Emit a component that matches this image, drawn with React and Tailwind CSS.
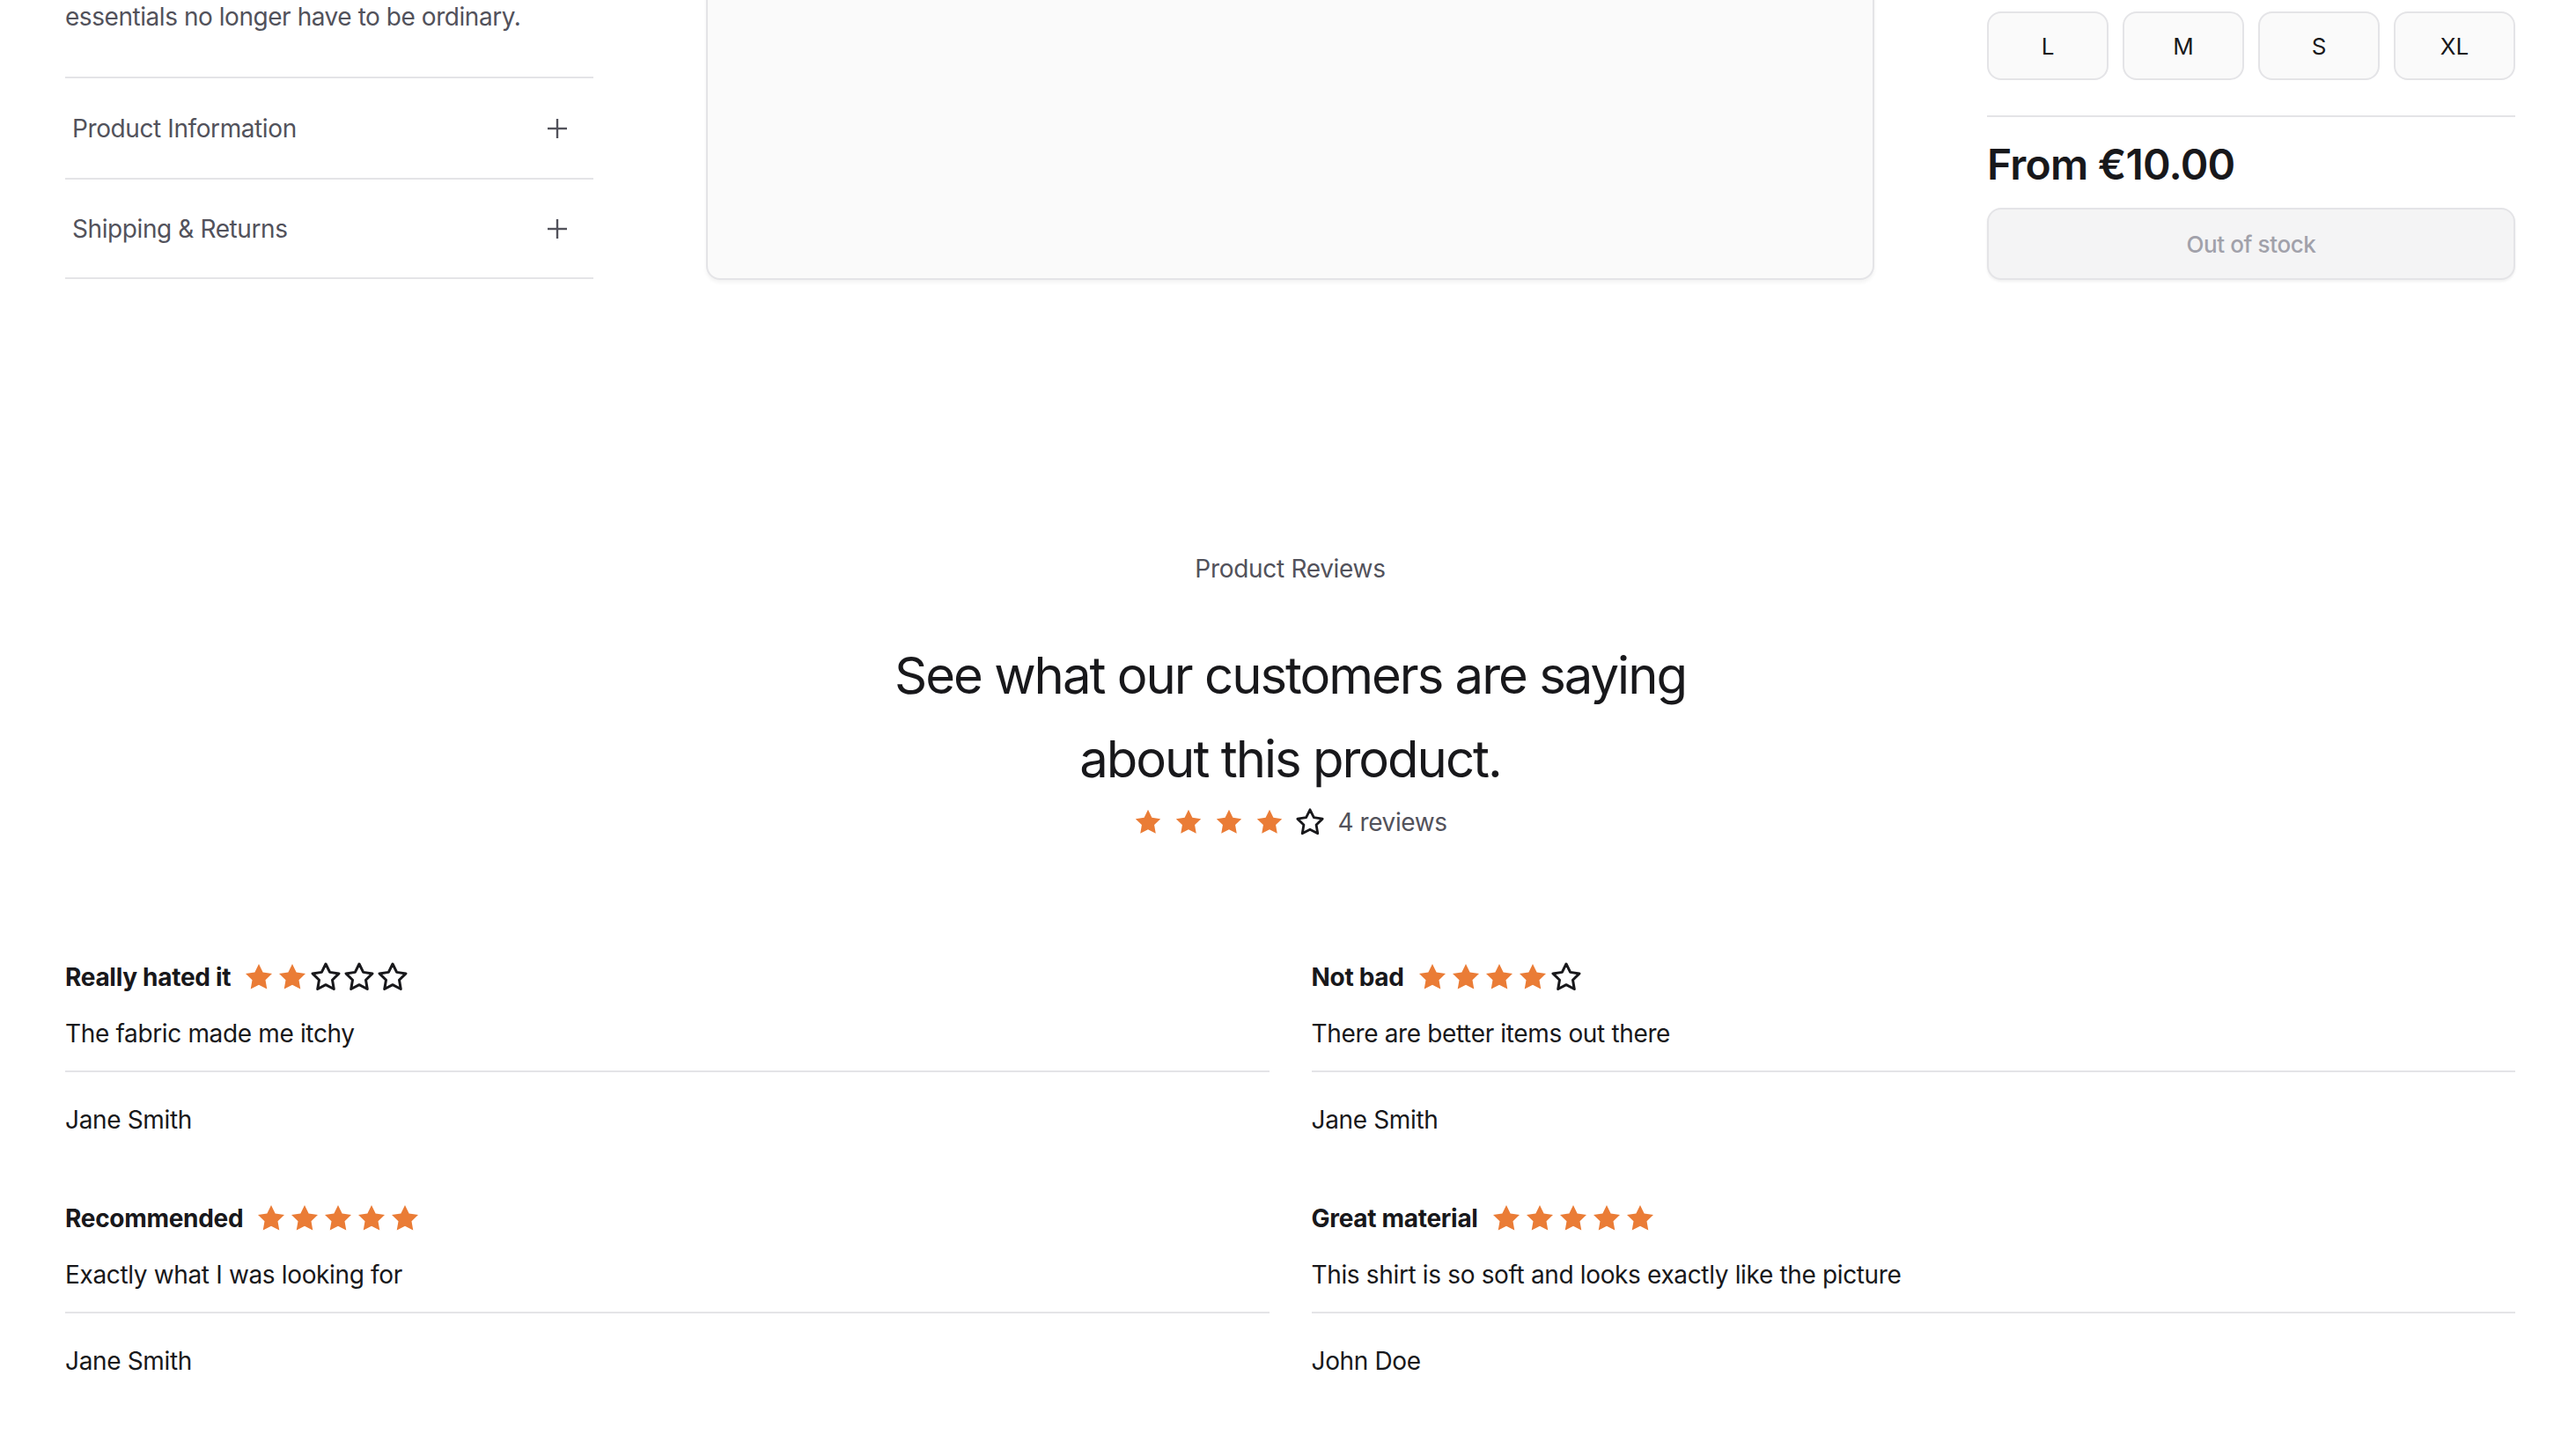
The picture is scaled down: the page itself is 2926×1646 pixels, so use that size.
const STAR_POINTS = "12,2 15.09,8.26 22,9.27 17,14.14 18.18,21.02 12,17.77 5.82,21.02 7,14.14 2,9.27 8.91,8.26";

const REVIEWS = [
  { title: "Really hated it", rating: 2, body: "The fabric made me itchy", author: "Jane Smith" },
  { title: "Not bad", rating: 4, body: "There are better items out there", author: "Jane Smith" },
  { title: "Recommended", rating: 5, body: "Exactly what I was looking for", author: "Jane Smith" },
  { title: "Great material", rating: 5, body: "This shirt is so soft and looks exactly like the picture", author: "John Doe" },
];

const SIZES = ["L", "M", "S", "XL"];

function Star({ filled, className }) {
  return (
    <svg viewBox="0 0 24 24" className={className} aria-hidden="true">
      <polygon
        points={STAR_POINTS}
        fill={filled ? "#ea7c36" : "none"}
        stroke={filled ? "none" : "#18181b"}
        strokeWidth="2"
        strokeLinejoin="round"
      />
    </svg>
  );
}

function Stars({ rating, className, gap }) {
  return (
    <div className={`flex items-center ${gap}`}>
      {[1, 2, 3, 4, 5].map((n) => (
        <Star key={n} filled={n <= rating} className={className} />
      ))}
    </div>
  );
}

function AccordionItem({ label, last }) {
  return (
    <div
      className={`flex h-[115px] items-center justify-between border-t-2 border-[#e4e4e7] pl-[8px] pr-[30px] ${
        last ? "border-b-2" : ""
      }`}
    >
      <span className="text-[28px] leading-[40px] tracking-[-0.4px] text-[#52525b]">{label}</span>
      <svg viewBox="0 0 22 22" className="h-[22px] w-[22px]" fill="none" stroke="#52525b" strokeWidth="2.4">
        <line x1="11" y1="0" x2="11" y2="22" />
        <line x1="0" y1="11" x2="22" y2="11" />
      </svg>
    </div>
  );
}

function Review({ review }) {
  return (
    <div className="flex flex-col">
      <div className="flex h-[40px] items-center gap-[14px]">
        <span className="text-[28px] font-bold leading-[40px] tracking-[-0.3px] text-[#18181b]">
          {review.title}
        </span>
        <Stars rating={review.rating} className="h-[36px] w-[36px]" gap="gap-[2px]" />
      </div>
      <p className="mt-[24px] text-[28px] leading-[40px] tracking-[-0.35px] text-[#18181b]">{review.body}</p>
      <div className="mt-[22px] border-t-2 border-[#e4e4e7]" />
      <p className="mt-[34px] text-[28px] leading-[40px] tracking-[-0.35px] text-[#18181b]">{review.author}</p>
    </div>
  );
}

export default function App() {
  return (
    <div
      className="min-h-screen w-full overflow-hidden bg-white pl-[74px] pr-[69px]"
      style={{ fontFamily: "Inter, 'Noto Sans', sans-serif" }}
    >
      {/* product row, scrolled part way down */}
      <div className="flex items-start">
        <div className="flex w-[600px] shrink-0 flex-col">
          <p className="-mt-[1px] text-[28px] leading-[40px] tracking-[-0.45px] text-[#52525b]">
            essentials no longer have to be ordinary.
          </p>
          <div className="mt-[48px]">
            <AccordionItem label="Product Information" />
            <AccordionItem label="Shipping & Returns" last />
          </div>
        </div>

        <div className="mx-[128px] flex-1">
          <div className="-mt-[40px] h-[358px] rounded-[16px] border-2 border-[#e4e4e7] bg-[#fafafa] shadow-[0_3px_4px_rgba(0,0,0,0.05)]" />
        </div>

        <div className="flex w-[600px] shrink-0 flex-col">
          <div className="mt-[13px] flex gap-[16px]">
            {SIZES.map((s) => (
              <button
                key={s}
                className="flex h-[78px] flex-1 items-center justify-center rounded-[16px] border-2 border-[#e4e4e7] bg-[#fafafa] text-[26px] text-[#18181b]"
              >
                {s}
              </button>
            ))}
          </div>
          <div className="mt-[40px] border-t-2 border-[#e4e4e7]" />
          <p className="mt-[19px] text-[48px] font-semibold leading-[70px] tracking-[-0.8px] text-[#18181b]">
            From €10.00
          </p>
          <button
            disabled
            className="mt-[14px] flex h-[82px] w-full items-center justify-center rounded-[16px] border-2 border-[#e4e4e7] bg-[#f4f4f5] text-[26px] font-medium tracking-[-0.4px] text-[#a1a1aa] shadow-[0_2px_3px_rgba(0,0,0,0.06)]"
          >
            Out of stock
          </button>
        </div>
      </div>

      {/* reviews */}
      <section className="mt-[308px] flex flex-col items-center">
        <p className="text-[28px] leading-[40px] tracking-[-0.3px] text-[#52525b]">Product Reviews</p>
        <h2 className="mt-[54px] max-w-[1000px] text-center text-[58px] font-normal leading-[95px] tracking-[-2px] text-[#18181b]">
          See what our customers are saying about this product.
        </h2>
        <div className="mt-[4px] flex h-[40px] items-center gap-[14px]">
          <Stars rating={4} className="h-[34px] w-[34px]" gap="gap-[12px]" />
          <span className="text-[28px] leading-[40px] tracking-[-0.4px] text-[#52525b]">4 reviews</span>
        </div>
      </section>

      <div className="mt-[136px] grid grid-cols-2 gap-x-[48px] gap-y-[72px] pb-[80px]">
        {REVIEWS.map((r) => (
          <Review key={r.title} review={r} />
        ))}
      </div>
    </div>
  );
}
